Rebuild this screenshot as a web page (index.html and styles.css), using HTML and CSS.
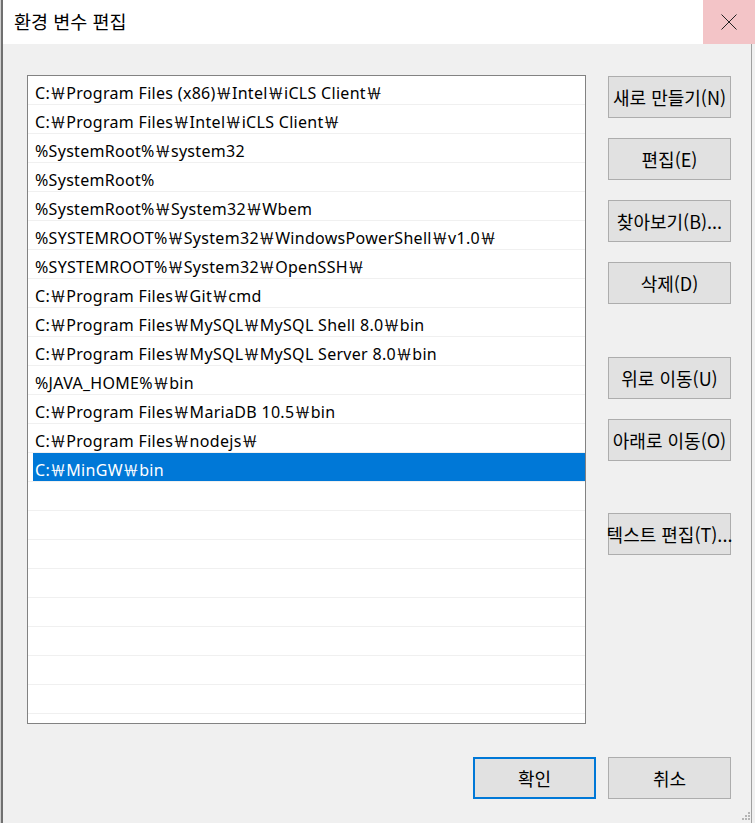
FILE: index.html
```html
<!DOCTYPE html>
<html lang="ko">
<head>
    <meta charset="UTF-8">
    <title>환경 변수 편집</title>
    <link rel="stylesheet" href="styles.css">
</head>
<body>
    <div class="window">
        <div class="titlebar">
            <span class="title">환경 변수 편집</span>
            <div class="close">
                <svg width="16" height="16" viewBox="0 0 16 16">
                    <path d="M0.5 0.5 L15.5 15.5 M15.5 0.5 L0.5 15.5" stroke="#222" stroke-width="1" fill="none"/>
                </svg>
            </div>
        </div>

        <div class="content">
            <div class="main">
                <div class="pathlist">
                    <div class="row"><span class="cell">C:￦Program Files (x86)￦Intel￦iCLS Client￦</span></div>
                    <div class="row"><span class="cell">C:￦Program Files￦Intel￦iCLS Client￦</span></div>
                    <div class="row"><span class="cell">%SystemRoot%￦system32</span></div>
                    <div class="row"><span class="cell">%SystemRoot%</span></div>
                    <div class="row"><span class="cell">%SystemRoot%￦System32￦Wbem</span></div>
                    <div class="row"><span class="cell">%SYSTEMROOT%￦System32￦WindowsPowerShell￦v1.0￦</span></div>
                    <div class="row"><span class="cell">%SYSTEMROOT%￦System32￦OpenSSH￦</span></div>
                    <div class="row"><span class="cell">C:￦Program Files￦Git￦cmd</span></div>
                    <div class="row"><span class="cell">C:￦Program Files￦MySQL￦MySQL Shell 8.0￦bin</span></div>
                    <div class="row"><span class="cell">C:￦Program Files￦MySQL￦MySQL Server 8.0￦bin</span></div>
                    <div class="row"><span class="cell">%JAVA_HOME%￦bin</span></div>
                    <div class="row"><span class="cell">C:￦Program Files￦MariaDB 10.5￦bin</span></div>
                    <div class="row"><span class="cell">C:￦Program Files￦nodejs￦</span></div>
                    <div class="row selected"><span class="cell">C:￦MinGW￦bin</span></div>
                    <div class="row"></div>
                    <div class="row"></div>
                    <div class="row"></div>
                    <div class="row"></div>
                    <div class="row"></div>
                    <div class="row"></div>
                    <div class="row"></div>
                    <div class="row"></div>
                </div>

                <div class="side">
                    <button class="btn">새로 만들기(N)</button>
                    <button class="btn">편집(E)</button>
                    <button class="btn">찾아보기(B)...</button>
                    <button class="btn">삭제(D)</button>
                    <button class="btn group">위로 이동(U)</button>
                    <button class="btn">아래로 이동(O)</button>
                    <button class="btn group2">텍스트 편집(T)...</button>
                </div>
            </div>

            <div class="footer">
                <button class="btn default">확인</button>
                <button class="btn">취소</button>
            </div>

            <!-- resize grip -->
            <svg class="grip" width="12" height="12" viewBox="0 0 12 12">
                <rect x="10" y="2" width="2" height="2" fill="#b5b5b5"/>
                <rect x="7" y="5" width="2" height="2" fill="#b5b5b5"/>
                <rect x="10" y="5" width="2" height="2" fill="#b5b5b5"/>
                <rect x="4" y="8" width="2" height="2" fill="#b5b5b5"/>
                <rect x="7" y="8" width="2" height="2" fill="#b5b5b5"/>
                <rect x="10" y="8" width="2" height="2" fill="#b5b5b5"/>
            </svg>
        </div>
    </div>
</body>
</html>
```

FILE: styles.css
```css
/* Reset */
body, button {
    margin: 0;
    padding: 0;
}

body {
    background-color: #cfcfcf;
    font-family: "Noto Sans CJK KR", "Noto Sans", sans-serif;
    color: #000;
    overflow: hidden;
}

.window {
    margin-left: 1px;
    border-left: 2px solid #707070;
    height: 823px;
    background-color: #f0f0f0;
    display: flex;
    flex-direction: column;
}

/* Title bar */
.titlebar {
    height: 44px;
    background-color: #fff;
    display: flex;
    align-items: center;
    justify-content: space-between;
}

.title {
    padding-left: 11px;
    font-size: 18.5px;
    padding-bottom: 2px;
}

.close {
    width: 52px;
    height: 44px;
    background-color: #f3c4c7;
    display: flex;
    align-items: center;
    justify-content: center;
}

/* Content */
.content {
    position: relative;
    flex: 1;
    padding: 31px 0 0 24px;
    border-right: 1px solid #a0a0a0;
    margin-right: 3px;
}

.main {
    display: grid;
    grid-template-columns: 559px 123px;
    column-gap: 22px;
    align-items: start;
}

.pathlist {
    height: 649px;
    box-sizing: border-box;
    border: 1px solid #828282;
    background-color: #fff;
    overflow: hidden;
}

.row {
    height: 28px;
    border-bottom: 1px solid #f0f0f0;
    padding-left: 5px;
    display: flex;
}

.cell {
    flex: 1;
    padding-left: 2px;
    font-family: "Noto Sans", "Noto Sans CJK KR", sans-serif;
    font-size: 16px;
    letter-spacing: 0.3px;
    line-height: 28px;
    white-space: nowrap;
    padding-top: 3px;
    box-sizing: border-box;
    height: 28px;
}

.row.selected .cell {
    background-color: #0078d7;
    color: #fff;
}

/* Buttons */
.side {
    display: flex;
    flex-direction: column;
    gap: 20px;
    padding-top: 1px;
}

.btn {
    width: 123px;
    height: 42px;
    box-sizing: border-box;
    background-color: #e1e1e1;
    border: 1px solid #adadad;
    font-family: "Noto Sans CJK KR", sans-serif;
    font-size: 18px;
    color: #000;
    white-space: nowrap;
    display: flex;
    align-items: center;
    justify-content: center;
    overflow: visible;
}

.btn.group {
    margin-top: 33px;
}

.btn.group2 {
    margin-top: 32px;
}

.btn.default {
    border: 2px solid #0078d7;
}

.footer {
    display: flex;
    justify-content: flex-end;
    gap: 12px;
    margin-top: 33px;
    padding-right: 20px;
}

.grip {
    position: absolute;
    right: 1px;
    bottom: 1px;
}
```
